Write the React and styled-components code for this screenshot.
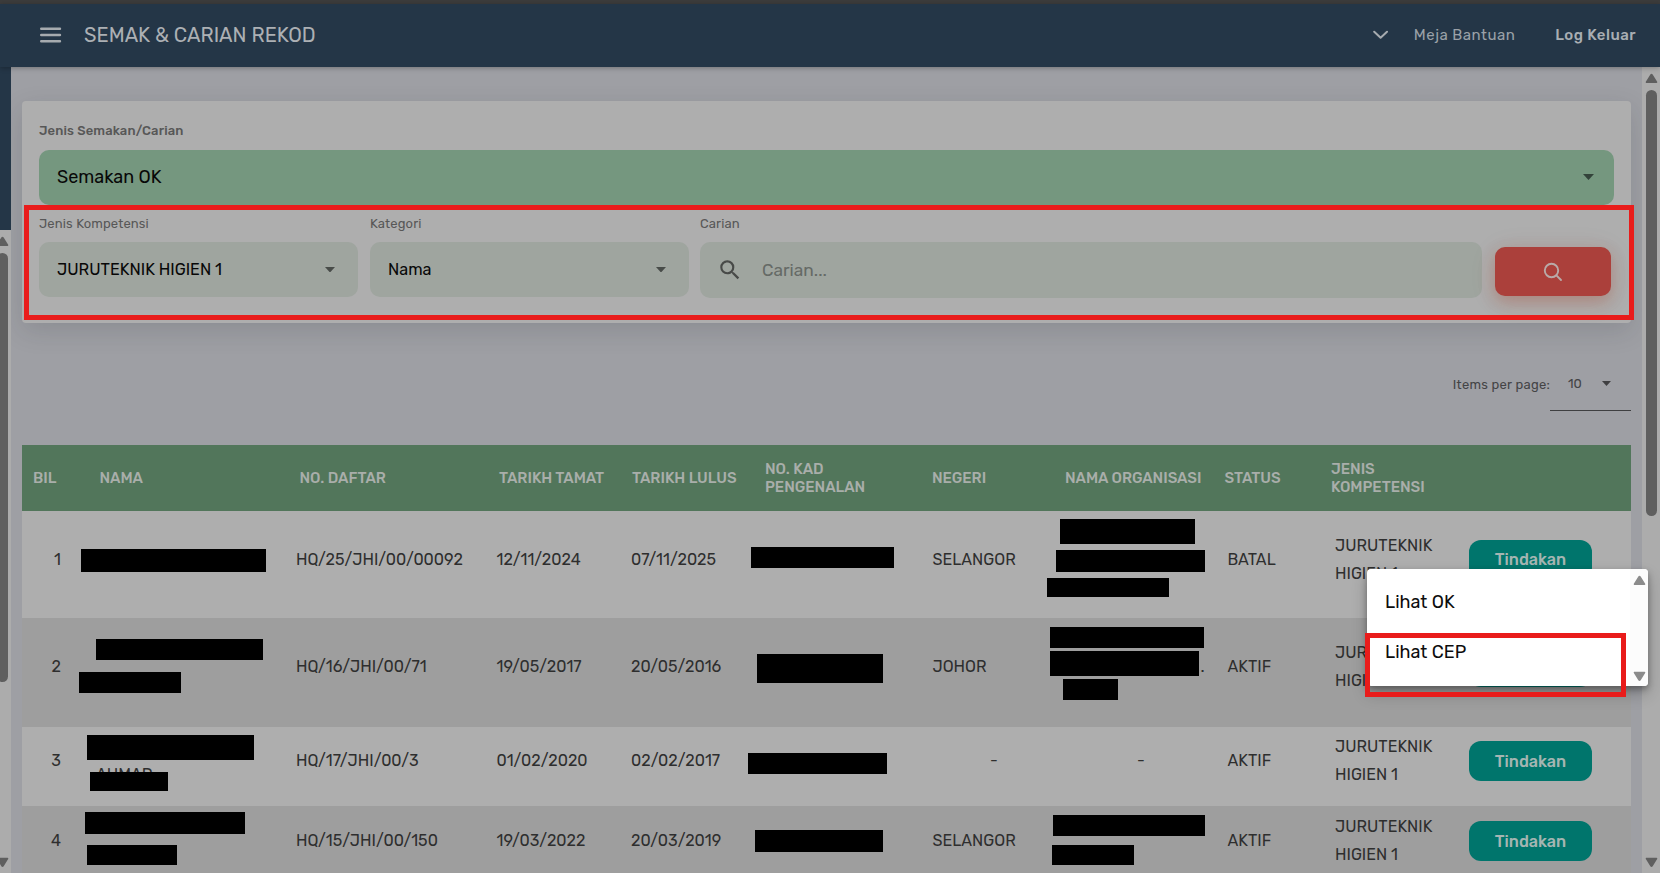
import React from "react";
import styled, { createGlobalStyle } from "styled-components";

const GlobalStyle = createGlobalStyle`
  *, *::before, *::after { box-sizing: border-box; }
  body {
    margin: 0;
    overflow: hidden;
    background: #9e9fa4;
    font-family: Rubik, Roboto, "Liberation Sans", sans-serif;
    color: #2e2e2e;
  }
  button { font-family: inherit; border: 0; padding: 0; }
`;

const Screen = styled.div`
  position: relative;
  display: flex;
  flex-direction: column;
  width: 1660px;
  height: 873px;
  overflow: hidden;
`;

const WindowEdge = styled.div`
  flex: none;
  height: 4px;
  background: #3c3c3c;
`;

const Header = styled.header`
  position: relative;
  z-index: 1;
  flex: none;
  display: flex;
  align-items: center;
  height: 63px;
  padding: 0 24px 1px 40px;
  background: #243647;
  box-shadow: 0 1px 5px rgba(0, 0, 0, 0.28);
`;

const Title = styled.h1`
  flex: 1;
  margin: 0 0 0 22px;
  font-size: 20.1px;
  font-weight: 450;
  color: #acb0b4;
`;

const HeaderLink = styled.a`
  margin-left: ${(p) => p.$gap}px;
  font-size: 15px;
  font-weight: ${(p) => (p.$strong ? 500 : 400)};
  letter-spacing: 0.48px;
  color: ${(p) => (p.$strong ? "#a9aeb3" : "#9aa1a8")};
`;

const Body = styled.div`
  flex: 1;
  display: flex;
  min-height: 0;
`;

const Rail = styled.div`
  flex: none;
  display: flex;
  flex-direction: column;
  width: 11px;
`;

const RailTop = styled.div`
  flex: none;
  height: 163px;
  background: #243647;
`;

const RailScroll = styled.div`
  flex: 1;
  display: flex;
  justify-content: flex-end;
  min-height: 0;
  overflow: hidden;
`;

const ScrollTrack = styled.div`
  flex: none;
  display: flex;
  flex-direction: column;
  align-items: center;
  width: 18px;
  padding: ${(p) => p.$pad};
  background: ${(p) => p.$bg || "#acacac"};
`;

const Thumb = styled.div`
  width: 11px;
  height: ${(p) => p.$h}px;
  margin: 6px 0 auto;
  border-radius: 6px;
  background: #5f5f5f;
`;

const ThumbGap = styled.div`
  flex: 1;
`;

const Main = styled.main`
  flex: 1;
  min-width: 0;
  padding: 34px 11px 0;
  overflow: hidden;
`;

const Card = styled.section`
  height: 222px;
  padding: 19px 17px 0;
  border-radius: 4px;
  background: #aeaeae;
  box-shadow: 0 8px 26px rgba(30, 32, 45, 0.14);
`;

const Label = styled.div`
  display: flex;
  align-items: center;
  height: ${(p) => (p.$strong ? 20 : 37)}px;
  margin-bottom: ${(p) => (p.$strong ? 10 : 0)}px;
  font-size: 13px;
  font-weight: ${(p) => (p.$strong ? 500 : 400)};
  letter-spacing: 0.13px;
  color: #575757;
`;

const Select = styled.div`
  display: flex;
  align-items: center;
  justify-content: space-between;
  height: 55px;
  padding: 0 ${(p) => (p.$primary ? 20 : 23.5)}px ${(p) => (p.$primary ? 1 : 0)}px 18px;
  border-radius: 10px;
  background: ${(p) => (p.$primary ? "#75977f" : "#9fa59f")};
  font-size: ${(p) => (p.$primary ? 18 : 16.2)}px;
  color: #080808;
`;

const FilterRow = styled.div`
  display: grid;
  grid-template-columns: 319px 319px 782px 116px;
  column-gap: 12px;
`;

const Field = styled.div`
  margin-left: ${(p) => p.$shift || 0}px;
  margin-right: ${(p) => -(p.$shift || 0)}px;
`;

const SearchBox = styled.div`
  display: flex;
  align-items: center;
  gap: 19px;
  height: 56px;
  padding: 0 0 0 17px;
  border-radius: 10px;
  background: #9fa59f;
  font-size: 17.3px;
  color: #656a66;
`;

const SearchButton = styled.button`
  display: flex;
  align-items: center;
  justify-content: center;
  width: 116px;
  height: 49px;
  margin: 42px 0 0;
  border-radius: 10px;
  background: #ab403b;
  box-shadow: 0 6px 16px rgba(171, 64, 40, 0.32), 0 4px 30px rgba(171, 64, 40, 0.08);
`;

const Paginator = styled.div`
  display: flex;
  justify-content: flex-end;
  height: 88px;
  margin-top: 34px;
  font-size: 13px;
  color: #444446;
`;

const PageLabel = styled.span`
  line-height: 55px;
  letter-spacing: 0.25px;
`;

const PageSize = styled.div`
  display: flex;
  align-items: center;
  justify-content: space-between;
  width: 81px;
  height: 54px;
  padding: 0 20px 0 18px;
  border-bottom: 1px solid #3f3f41;
`;

const TableHead = styled.div`
  display: grid;
  grid-template-columns: 66.5px 200px 199.5px 133px 133px 167px 133px 159.5px 106.5px 1fr;
  align-items: center;
  height: 66px;
  padding-left: 11px;
  background: #52765b;
`;

const HeadCell = styled.div`
  font-size: 15px;
  font-weight: 500;
  line-height: 18px;
  white-space: pre-line;
  letter-spacing: -0.02px;
  color: #a9aeaa;
`;

const Row = styled.div`
  display: grid;
  grid-template-columns: 78px 195px 200.5px 134.5px 134.5px 167px 132px 163px 107px 134px 1fr;
  height: ${(p) => p.$h}px;
  background: ${(p) => (p.$alt ? "#9e9e9e" : "#aeaeae")};

  > * {
    padding-bottom: ${(p) => p.$lift}px;
  }
`;

const Cell = styled.div`
  position: relative;
  display: flex;
  align-items: center;
  justify-content: ${(p) => p.$align || "flex-start"};
  padding-left: ${(p) => p.$left ?? 1}px;
  padding-right: ${(p) => p.$right || 0}px;
  font-size: 16.1px;
  line-height: 28px;
  white-space: pre-line;
`;

const Redaction = styled.span`
  position: absolute;
  left: ${(p) => p.$box[0]}px;
  top: ${(p) => p.$box[1]}px;
  width: ${(p) => p.$box[2]}px;
  height: ${(p) => p.$box[3]}px;
  background: #000;
`;

const NameRemainder = styled.span`
  align-self: flex-start;
  margin: 34px 0 0 -5px;
`;

const ActionButton = styled.button`
  width: 123px;
  height: 40px;
  border-radius: 12px;
  background: #00756c;
  font-size: 16.2px;
  font-weight: 500;
  color: #a5b5b2;
`;

const Menu = styled.div`
  position: absolute;
  left: 1367px;
  top: 569px;
  display: flex;
  justify-content: space-between;
  width: 281px;
  height: 117px;
  overflow: hidden;
  border-radius: 4px;
  background: #fff;
`;

const MenuShadow = styled.div`
  position: absolute;
  left: 1367px;
  top: 569px;
  width: 281px;
  height: 117px;
  border-radius: 4px;
  box-shadow: 0 3px 6px rgba(0, 0, 0, 0.3), 0 8px 16px rgba(0, 0, 0, 0.22);
`;

const MenuItems = styled.div`
  padding: 8px 0 0 18px;
`;

const MenuItem = styled.div`
  height: 50px;
  font-size: 18px;
  line-height: 50px;
  color: #0c0c0c;
`;

const Highlight = styled.div`
  position: absolute;
  left: ${(p) => p.$box[0]}px;
  top: ${(p) => p.$box[1]}px;
  width: ${(p) => p.$box[2]}px;
  height: ${(p) => p.$box[3]}px;
  border: 5px solid #e91c1b;
`;

const Caret = ({ color = "#484c49", size = 10 }) => (
  <svg width={size} height={size * 0.55} viewBox="0 0 10 5.5">
    <path d="M0 0h10L5 5.5z" fill={color} />
  </svg>
);

const ScrollArrow = ({ down, color = "#5f5f5f" }) => (
  <svg width="13" height="11" viewBox="0 0 13 11">
    <path
      d={down ? "M1.5 1.5h10L7 8.8q-.5.8-1 0z" : "M1.5 9.2h10L7 1.9q-.5-.8-1 0z"}
      fill={color}
      stroke={color}
      strokeWidth="1.6"
      strokeLinejoin="round"
    />
  </svg>
);

const HEAD = [
  "BIL",
  "NAMA",
  "NO. DAFTAR",
  "TARIKH TAMAT",
  "TARIKH LULUS",
  "NO. KAD\nPENGENALAN",
  "NEGERI",
  "NAMA ORGANISASI",
  "STATUS",
  "JENIS\nKOMPETENSI",
];

// Redaction boxes are [left, top, width, height], relative to their cell.
const ROWS = [
  {
    h: 107,
    lift: 10,
    reg: "HQ/25/JHI/00/00092",
    end: "12/11/2024",
    pass: "07/11/2025",
    state: "SELANGOR",
    status: "BATAL",
    name: [[-19, 38, 184.5, 23]],
    id: [[-13.5, 36, 143, 20.5]],
    org: [[-3.5, 8, 134.5, 25], [-7.5, 39, 148.5, 22], [-16.5, 67, 122, 19]],
  },
  {
    h: 109,
    lift: 11,
    reg: "HQ/16/JHI/00/71",
    end: "19/05/2017",
    pass: "20/05/2016",
    state: "JOHOR",
    status: "AKTIF",
    orgText: ".",
    name: [[-4.5, 21, 167, 20.5], [-21, 54, 102, 21]],
    id: [[-7.5, 36, 125.5, 29]],
    org: [[-13.5, 9, 153.5, 21], [-13.5, 33, 149, 25], [-0.5, 61, 55, 20.5]],
  },
  {
    h: 79,
    lift: 11,
    reg: "HQ/17/JHI/00/3",
    end: "01/02/2020",
    pass: "02/02/2017",
    state: null,
    status: "AKTIF",
    orgText: "-",
    nameText: "AHMAD",
    name: [[-13, 8, 167, 25], [-10.5, 45, 78.5, 19]],
    id: [[-16.5, 26, 139, 20.5]],
    org: [],
  },
  {
    h: 79,
    lift: 9,
    reg: "HQ/15/JHI/00/150",
    end: "19/03/2022",
    pass: "20/03/2019",
    state: "SELANGOR",
    status: "AKTIF",
    name: [[-15, 6, 160, 22], [-13, 39, 90, 20]],
    id: [[-9.5, 24, 128, 22]],
    org: [[-10.5, 9, 152, 21], [-11.5, 39, 82, 20]],
  },
];

const Redactions = ({ boxes }) =>
  boxes.map((box) => <Redaction key={box.join()} $box={box} />);

const RecordRow = ({ record: r, index }) => (
  <Row $h={r.h} $lift={r.lift} $alt={index % 2 === 1}>
    <Cell $align="flex-end" $right={39}>{index + 1}</Cell>
    <Cell>
      {r.nameText && <NameRemainder>{r.nameText}</NameRemainder>}
      <Redactions boxes={r.name} />
    </Cell>
    <Cell>{r.reg}</Cell>
    <Cell>{r.end}</Cell>
    <Cell>{r.pass}</Cell>
    <Cell><Redactions boxes={r.id} /></Cell>
    {r.state ? <Cell>{r.state}</Cell> : <Cell $align="center" $right={8}>-</Cell>}
    <Cell $align={r.orgText === "." ? "flex-end" : "center"} $right={r.orgText === "." ? 22 : 9}>
      {r.orgText}
      <Redactions boxes={r.org} />
    </Cell>
    <Cell>{r.status}</Cell>
    <Cell $left={1.5}>{"JURUTEKNIK\nHIGIEN 1"}</Cell>
    <Cell $left={1.5}>
      <ActionButton>Tindakan</ActionButton>
    </Cell>
  </Row>
);

export default function App() {
  return (
    <>
      <GlobalStyle />
      <Screen>
        <WindowEdge />
        <Header>
          <svg width="22" height="16" viewBox="0 0 22 16" stroke="#a6abaf" strokeWidth="2.4" strokeLinecap="round">
            <path d="M1.2 1.7h18.8M1.2 8h18.8M1.2 14.3h18.8" />
          </svg>
          <Title>SEMAK &amp; CARIAN REKOD</Title>
          <svg width="16" height="10" viewBox="0 0 16 10" fill="none" stroke="#a6abaf" strokeWidth="2" strokeLinecap="round" strokeLinejoin="round">
            <path d="M1.2 1.8l6.4 6 6.4-6" />
          </svg>
          <HeaderLink $gap={25}>Meja Bantuan</HeaderLink>
          <HeaderLink $gap={40} $strong>Log Keluar</HeaderLink>
        </Header>
        <Body>
          <Rail>
            <RailTop />
            <RailScroll>
              <ScrollTrack $pad="6px 0 5px">
                <ScrollArrow />
                <Thumb $h={429} />
                <ScrollArrow down />
              </ScrollTrack>
            </RailScroll>
          </Rail>
          <Main>
            <Card>
              <Label $strong>Jenis Semakan/Carian</Label>
              <Select $primary>
                Semakan OK
                <Caret color="#33433a" size={11} />
              </Select>
              <FilterRow>
                <Field>
                  <Label>Jenis Kompetensi</Label>
                  <Select>JURUTEKNIK HIGIEN 1<Caret /></Select>
                </Field>
                <Field>
                  <Label>Kategori</Label>
                  <Select>Nama<Caret /></Select>
                </Field>
                <Field $shift={-1}>
                  <Label>Carian</Label>
                  <SearchBox>
                    <svg width="26" height="26" viewBox="0 0 24 24" fill="#484a48">
                      <path d="M15.5 14h-.79l-.28-.27A6.471 6.471 0 0 0 16 9.5 6.5 6.5 0 1 0 9.5 16c1.61 0 3.09-.59 4.23-1.57l.27.28v.79l5 4.99L20.49 19l-4.99-5zm-6 0C7.01 14 5 11.99 5 9.5S7.01 5 9.5 5 14 7.01 14 9.5 11.99 14 9.5 14z" />
                    </svg>
                    Carian...
                  </SearchBox>
                </Field>
                <SearchButton>
                  <svg width="20" height="20" viewBox="0 0 20 20" fill="none" stroke="#b9aaa8" strokeWidth="1.9" strokeLinecap="round">
                    <circle cx="8.5" cy="8.5" r="6.7" />
                    <path d="M13.4 13.4l4.6 4.6" />
                  </svg>
                </SearchButton>
              </FilterRow>
            </Card>
            <Paginator>
              <PageLabel>Items per page:</PageLabel>
              <PageSize>10<Caret color="#3f3f41" size={9} /></PageSize>
            </Paginator>
            <TableHead>
              {HEAD.map((text) => (
                <HeadCell key={text}>{text}</HeadCell>
              ))}
            </TableHead>
            {ROWS.map((r, i) => (
              <RecordRow key={r.reg} record={r} index={i} />
            ))}
          </Main>
          <ScrollTrack $pad="6px 0 5px">
            <ScrollArrow />
            <Thumb $h={426} />
            <ScrollArrow down />
          </ScrollTrack>
        </Body>
        <MenuShadow />
        <Menu>
          <MenuItems>
            <MenuItem>Lihat OK</MenuItem>
            <MenuItem>Lihat CEP</MenuItem>
          </MenuItems>
          <ScrollTrack $pad="6px 0 4px" $bg="#fcfcfc">
            <ScrollArrow color="#8b8b8b" />
            <ThumbGap />
            <ScrollArrow down color="#8b8b8b" />
          </ScrollTrack>
        </Menu>
        <Highlight $box={[24, 205, 1610, 115]} />
        <Highlight $box={[1365, 633, 260.5, 64]} />
      </Screen>
    </>
  );
}
